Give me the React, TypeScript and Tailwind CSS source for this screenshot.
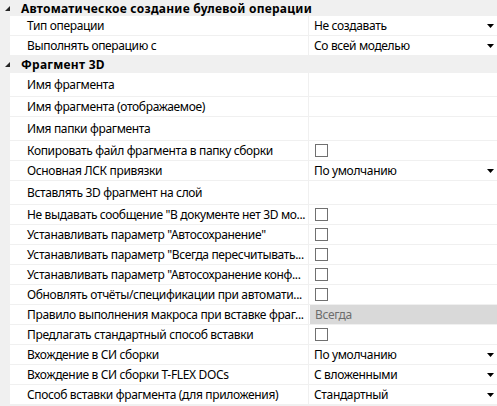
import React from "react";

type Value =
  | { kind: "empty" }
  | { kind: "select"; text: string }
  | { kind: "check" }
  | { kind: "disabled"; text: string };

interface PropRow {
  label: string;
  value: Value;
  h: string;
}

interface Category {
  title: string;
  h: string;
  rows: PropRow[];
}

const categories: Category[] = [
  {
    title: "Автоматическое создание булевой операции",
    h: "h-[16px]",
    rows: [
      { label: "Тип операции", value: { kind: "select", text: "Не создавать" }, h: "h-[20px]" },
      { label: "Выполнять операцию с", value: { kind: "select", text: "Со всей моделью" }, h: "h-[20px]" },
    ],
  },
  {
    title: "Фрагмент 3D",
    h: "h-[17px]",
    rows: [
      { label: "Имя фрагмента", value: { kind: "empty" }, h: "h-[24px]" },
      { label: "Имя фрагмента (отображаемое)", value: { kind: "empty" }, h: "h-[20px]" },
      { label: "Имя папки фрагмента", value: { kind: "empty" }, h: "h-[24px]" },
      { label: "Копировать файл фрагмента в папку сборки", value: { kind: "check" }, h: "h-[20px]" },
      { label: "Основная ЛСК привязки", value: { kind: "select", text: "По умолчанию" }, h: "h-[20px]" },
      { label: "Вставлять 3D фрагмент на слой", value: { kind: "empty" }, h: "h-[24px]" },
      { label: "Не выдавать сообщение \"В документе нет 3D мо...", value: { kind: "check" }, h: "h-[20px]" },
      { label: "Устанавливать параметр \"Автосохранение\"", value: { kind: "check" }, h: "h-[20px]" },
      { label: "Устанавливать параметр \"Всегда пересчитывать...", value: { kind: "check" }, h: "h-[20px]" },
      { label: "Устанавливать параметр \"Автосохранение конф...", value: { kind: "check" }, h: "h-[20px]" },
      { label: "Обновлять отчёты/спецификации при автомати...", value: { kind: "check" }, h: "h-[20px]" },
      { label: "Правило выполнения макроса при вставке фраг...", value: { kind: "disabled", text: "Всегда" }, h: "h-[20px]" },
      { label: "Предлагать стандартный способ вставки", value: { kind: "check" }, h: "h-[20px]" },
      { label: "Вхождение в СИ сборки", value: { kind: "select", text: "По умолчанию" }, h: "h-[20px]" },
      { label: "Вхождение в СИ сборки T-FLEX DOCs", value: { kind: "select", text: "С вложенными" }, h: "h-[20px]" },
      { label: "Способ вставки фрагмента (для приложения)", value: { kind: "select", text: "Стандартный" }, h: "h-[20px]" },
    ],
  },
];

const DropArrow = () => (
  <svg width="7" height="4" viewBox="0 0 7 4" className="shrink-0">
    <path d="M0 0h7L3.5 4z" fill="#000" />
  </svg>
);

const ValueCell: React.FC<{ value: Value }> = ({ value }) => {
  switch (value.kind) {
    case "select":
      return (
        <div className="flex flex-1 min-w-0 items-center pl-[5px] pr-[3px]">
          <span className="flex-1 whitespace-nowrap overflow-hidden">{value.text}</span>
          <DropArrow />
        </div>
      );
    case "check":
      return (
        <div className="flex flex-1 items-center pl-[6px]">
          <div className="w-[13px] h-[13px] border border-[#707070] bg-white" />
        </div>
      );
    case "disabled":
      return (
        <div className="flex flex-1 items-center self-stretch bg-[#d9d9d9] pl-[5px] ml-px text-[#6d6d6d]">
          {value.text}
        </div>
      );
    default:
      return <div className="flex-1" />;
  }
};

export default function App() {
  return (
    <div
      className="w-[497px] h-[406px] overflow-hidden bg-[#f0f0f0] text-[12px] leading-[15px] tracking-[-0.35px] text-black"
      style={{ fontFamily: '"Noto Sans", "Open Sans", sans-serif' }}
    >
      {categories.map((cat) => (
        <div key={cat.title}>
          <div className={`flex items-center ${cat.h}`}>
            <svg width="5" height="5" viewBox="0 0 5 5" className="ml-[5px] mr-[11px] shrink-0">
              <path d="M5 0v5H0z" fill="#262626" />
            </svg>
            <span className="font-bold tracking-[0.25px] whitespace-nowrap">{cat.title}</span>
          </div>
          {cat.rows.map((row) => (
            <div
              key={row.label}
              className={`flex ml-[10px] bg-white border-b border-[#f0f0f0] ${row.h}`}
            >
              <div className="flex items-center w-[299px] shrink-0 pl-[17px] border-r border-[#f0f0f0] whitespace-nowrap overflow-hidden">
                {row.label}
              </div>
              <ValueCell value={row.value} />
            </div>
          ))}
        </div>
      ))}
    </div>
  );
}
